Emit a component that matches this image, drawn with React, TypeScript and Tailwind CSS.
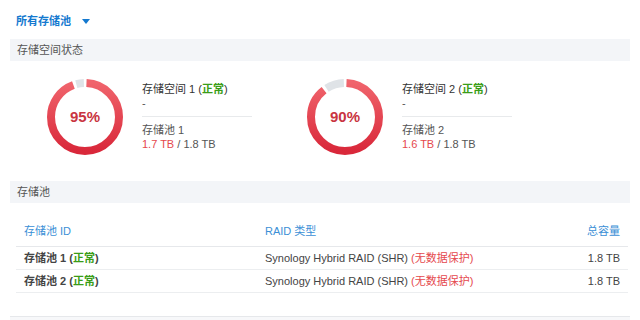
const FONT = "font-['Liberation_Sans','Noto_Sans_CJK_SC',sans-serif]";

type Vol = { id: number; pct: number; used: string };

const VOLUMES: Vol[] = [
  { id: 1, pct: 95, used: "1.7 TB" },
  { id: 2, pct: 90, used: "1.6 TB" },
];

function Donut({ pct, gid }: { pct: number; gid: string }) {
  const r = 34;
  const c = 2 * Math.PI * r;
  const gap = 1.5;
  const red = (pct / 100) * c - gap * 2;
  const gray = c - (pct / 100) * c - gap * 2;
  return (
    <div className="relative h-[76px] w-[76px] shrink-0">
      <svg width="76" height="76" viewBox="0 0 76 76">
        <defs>
          {/* the ring is rotated -90deg, so local +x points up */}
          <linearGradient id={gid} x1="1" y1="0" x2="0" y2="0">
            <stop offset="0" stopColor="#f0646c" />
            <stop offset="1" stopColor="#d9283a" />
          </linearGradient>
        </defs>
        <g transform="rotate(-90 38 38)">
          <circle
            cx="38"
            cy="38"
            r={r}
            fill="none"
            stroke={`url(#${gid})`}
            strokeWidth="8"
            strokeDasharray={`${red} ${c}`}
            strokeDashoffset={-gap}
          />
          <circle
            cx="38"
            cy="38"
            r={r}
            fill="none"
            stroke="#dfe3e7"
            strokeWidth="8"
            strokeDasharray={`${gray} ${c}`}
            strokeDashoffset={-((pct / 100) * c + gap)}
          />
        </g>
      </svg>
      <div className="absolute inset-0 flex items-center justify-center text-[15px] font-semibold text-[#c93441]">
        {pct}%
      </div>
    </div>
  );
}

function Ok() {
  return (
    <>
      (<span className="font-bold text-[#3a9d17]">正常</span>)
    </>
  );
}

function VolumeCard({ v }: { v: Vol }) {
  return (
    <div className="flex items-start">
      <Donut pct={v.pct} gid={`g${v.id}`} />
      <div className="ml-[19px] mt-[3px] flex w-[110px] flex-col text-[11px] leading-[14px] text-[#555]">
        <div className="text-[#333]">
          存储空间 {v.id} <Ok />
        </div>
        <div>-</div>
        <div className="my-[6px] h-px bg-[#e8eaec]" />
        <div>存储池 {v.id}</div>
        <div>
          <span className="text-[#e5484d]">{v.used}</span> / 1.8 TB
        </div>
      </div>
    </div>
  );
}

function Bar({ label }: { label: string }) {
  return (
    <div className="mx-[10px] flex h-[22px] items-center bg-[#f3f5f8] pl-[7px] text-[11px] text-[#555]">
      {label}
    </div>
  );
}

export default function App() {
  return (
    <div className={`h-[320px] w-[640px] overflow-hidden bg-white ${FONT}`}>
      <div className="flex h-[39px] items-center pl-4 pt-[3px]">
        <span className="text-[11px] font-bold text-[#1479cf]">所有存储池</span>
        <svg width="8" height="5" viewBox="0 0 8 5" className="ml-[11px]">
          <path d="M0 0h8L4 5z" fill="#1479cf" />
        </svg>
      </div>

      <Bar label="存储空间状态" />

      <div className="grid h-[120px] grid-cols-[260px_260px] pl-[47px] pt-[18px]">
        {VOLUMES.map((v) => (
          <VolumeCard key={v.id} v={v} />
        ))}
      </div>

      <Bar label="存储池" />

      <div className="mx-4 mt-[14px] w-[612px] text-[11px]">
        <div className="grid h-[30px] grid-cols-[241px_1fr_100px] items-center border-b border-[#e6e8eb] px-2 text-[#3b8fd6]">
          <span>存储池 ID</span>
          <span>RAID 类型</span>
          <span className="text-right">总容量</span>
        </div>
        {VOLUMES.map((v) => (
          <div
            key={v.id}
            className="grid h-[23px] grid-cols-[241px_1fr_100px] items-center border-b border-[#eceef0] px-2 text-[#444]"
          >
            <span className="font-bold text-[#444]">
              存储池 {v.id} <Ok />
            </span>
            <span>
              Synology Hybrid RAID (SHR) <span className="text-[#e5484d]">(无数据保护)</span>
            </span>
            <span className="text-right">1.8 TB</span>
          </div>
        ))}
      </div>

      <div className="mx-[10px] mt-[23px] h-[10px] border-t border-[#e6e8eb] bg-[#f7f8fa]" />
    </div>
  );
}
